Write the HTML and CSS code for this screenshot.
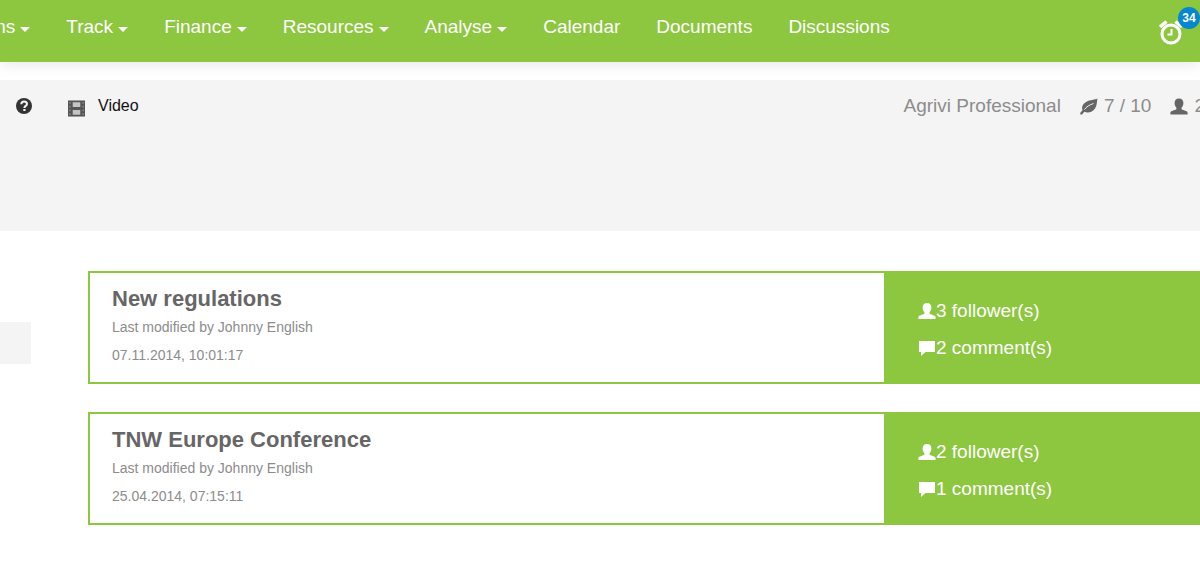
FILE: index.html
```html
<!DOCTYPE html>
<html lang="en">
<head>
    <meta charset="UTF-8">
    <meta name="viewport" content="width=device-width, initial-scale=1.0">
    <title>Discussions</title>
    <link rel="stylesheet" href="styles.css">
</head>
<body>
    <!-- shared icons -->
    <svg class="sprite" aria-hidden="true">
        <symbol id="icon-user" viewBox="0 0 18 16">
            <path d="M9 0C6 0 4.600 1.800 4.600 4.500C4.600 6.500 5.400 8.200 6.400 9.200V10.800C4.500 12 1 12.200 0.400 14V16H17.600V14C17 12.200 13.500 12 11.600 10.800V9.200C12.600 8.200 13.400 6.500 13.400 4.500C13.400 1.800 12 0 9 0Z"/>
        </symbol>
        <symbol id="icon-comment" viewBox="0 0 18 16">
            <path d="M1 1H17V12H7.500L3 16V12H1Z"/>
        </symbol>
    </svg>

    <header class="header">
        <nav>
            <ul class="menu">
                <li><a href="#">ms<span class="caret"></span></a></li>
                <li><a href="#">Track<span class="caret"></span></a></li>
                <li><a href="#">Finance<span class="caret"></span></a></li>
                <li><a href="#">Resources<span class="caret"></span></a></li>
                <li><a href="#">Analyse<span class="caret"></span></a></li>
                <li><a href="#">Calendar</a></li>
                <li><a href="#">Documents</a></li>
                <li><a href="#">Discussions</a></li>
            </ul>
        </nav>
        <a href="#" class="alarm">
            <svg class="alarm-icon" viewBox="0 0 24 26" fill="none" stroke="#fff">
                <circle cx="12" cy="15" r="9" stroke-width="3"/>
                <path d="M1 8L7.500 2.500M16.500 2.500L23 8" stroke-width="3.500"/>
                <path d="M12.500 10V15.500H8.500" stroke-width="2"/>
            </svg>
            <span class="badge">34</span>
        </a>
    </header>

    <div class="toolbar">
        <div class="help">
            <a href="#" class="help-link" aria-label="Help">
                <svg class="help-icon" viewBox="0 0 16 16">
                    <circle cx="8" cy="8" r="8" fill="#333"/>
                    <path d="M5.300 6.200C5.300 4.200 6.500 3.400 8.100 3.400C9.800 3.400 11 4.400 11 5.900C11 7.900 8.400 7.900 8.400 9.900" fill="none" stroke="#f4f4f4" stroke-width="2"/>
                    <rect x="7.300" y="11" width="2.200" height="2" fill="#f4f4f4"/>
                </svg>
            </a>
            <a href="#" class="video">
                <svg class="video-icon" viewBox="0 0 18 17">
                    <path fill="#555" d="M0 0H18V17H0Z"/>
                    <path stroke="#888" stroke-width="1.500" stroke-dasharray="2 2" d="M2 1.500V16M16 1.500V16"/>
                    <path fill="#c4c4c4" d="M5 2H13V7H5ZM5 10H13V15H5Z"/>
                </svg>
                Video
            </a>
        </div>
        <div class="plan">
            <span>Agrivi Professional</span>
            <span class="usage">
                <svg class="plan-icon" viewBox="0 0 18 17">
                    <path fill="#666" d="M17.500 0.500C15 2 10 1.500 6 4C2.500 6.200 1.300 9 2.500 12.300L0.300 14.800V16.500H2L4.300 13.800C8 15.300 12.500 14.300 15 10.500C17.300 7 16.700 3.500 17.500 0.500Z"/>
                    <path fill="none" stroke="#f4f4f4" d="M4.500 11.500C6.500 8.500 9.500 7 13.500 5.500"/>
                </svg>
                7 / 10
            </span>
            <span class="usage">
                <svg class="plan-icon" fill="#666"><use href="#icon-user"/></svg>
                2
            </span>
        </div>
    </div>

    <div class="content">
        <aside class="sidebar">
            <div class="sidebar-item"></div>
        </aside>
        <main class="topics">
            <article class="topic">
                <div class="topic-text">
                    <h2>New regulations</h2>
                    <p>Last modified by Johnny English</p>
                    <p>07.11.2014, 10:01:17</p>
                </div>
                <div class="topic-stats">
                    <div class="stat"><svg class="stat-icon"><use href="#icon-user"/></svg>3 follower(s)</div>
                    <div class="stat"><svg class="stat-icon"><use href="#icon-comment"/></svg>2 comment(s)</div>
                </div>
            </article>
            <article class="topic">
                <div class="topic-text">
                    <h2>TNW Europe Conference</h2>
                    <p>Last modified by Johnny English</p>
                    <p>25.04.2014, 07:15:11</p>
                </div>
                <div class="topic-stats">
                    <div class="stat"><svg class="stat-icon"><use href="#icon-user"/></svg>2 follower(s)</div>
                    <div class="stat"><svg class="stat-icon"><use href="#icon-comment"/></svg>1 comment(s)</div>
                </div>
            </article>
        </main>
    </div>
</body>
</html>
```
FILE: styles.css
```css
* {
    box-sizing: border-box;
}
body {
    margin: 0;
    font-family: "Liberation Sans", Arial, sans-serif;
    background: white;
    overflow-x: hidden;
}
a {
    color: inherit;
    text-decoration: none;
}
.sprite {
    display: none;
}
.header {
    display: flex;
    justify-content: space-between;
    height: 62px;
    padding-top: 16px;
    background: #8dc63f;
    color: white;
    font-size: 19px;
    line-height: 22px;
    box-shadow: 0 2px 14px rgba(0, 0, 0, 0.1);
}
.menu {
    display: flex;
    gap: 36px;
    margin: 0 0 0 -10px;
    padding: 0;
    list-style: none;
}
.menu a {
    display: flex;
    align-items: center;
}
.caret {
    margin: 4px 0 0 5px;
    border: 5px solid transparent;
    border-top-color: white;
    border-bottom: 0;
}
.alarm {
    position: relative;
    width: 41px;
}
.alarm-icon {
    display: block;
    width: 24px;
    height: 26px;
    margin-top: 3px;
}
.badge {
    position: absolute;
    top: -9px;
    right: 0;
    width: 22px;
    height: 22px;
    border-radius: 50%;
    background: #0788ce;
    font-size: 12px;
    font-weight: bold;
    text-align: center;
}
.toolbar {
    display: flex;
    justify-content: space-between;
    height: 151px;
    margin-top: 18px;
    padding: 14px 0 0 16px;
    background: #f4f4f4;
    line-height: 24px;
}
.help, .plan {
    display: flex;
    align-items: flex-start;
}
.help {
    gap: 36px;
}
.help-link, .video {
    display: flex;
    align-items: center;
    height: 24px;
}
.help-icon {
    width: 16px;
    height: 16px;
}
.video {
    gap: 13px;
    font-size: 16px;
    color: #111;
}
.video-icon {
    width: 17px;
    height: 17px;
    margin-top: 4px;
}
.plan {
    gap: 19px;
    margin-right: -5px;
    font-size: 19px;
    color: #8c8c8c;
}
.usage {
    display: flex;
    align-items: center;
    gap: 6px;
}
.plan-icon {
    width: 18px;
    height: 17px;
}
.content {
    display: flex;
    gap: 57px;
    padding-top: 40px;
}
.sidebar {
    width: 31px;
    padding-top: 51px;
}
.sidebar-item {
    height: 42px;
    background: #f4f4f4;
}
.topics {
    flex: 1;
    display: flex;
    flex-direction: column;
    gap: 28px;
}
.topic {
    display: flex;
    border: 2px solid #8dc63f;
    border-right: 0;
}
.topic-text {
    flex: 1;
    padding: 12px 22px 13px;
    color: #8c8c8c;
    font-size: 14px;
    line-height: 28px;
}
.topic-text h2 {
    margin: 0;
    color: #666;
    font-size: 22px;
    line-height: 28px;
}
.topic-text p {
    margin: 0;
}
.topic-stats {
    width: 316px;
    padding: 19px 34px 0;
    background: #8dc63f;
    color: white;
    font-size: 19px;
    line-height: 37px;
}
.stat {
    display: flex;
    align-items: center;
}
.stat-icon {
    width: 18px;
    height: 16px;
    fill: white;
}
```
